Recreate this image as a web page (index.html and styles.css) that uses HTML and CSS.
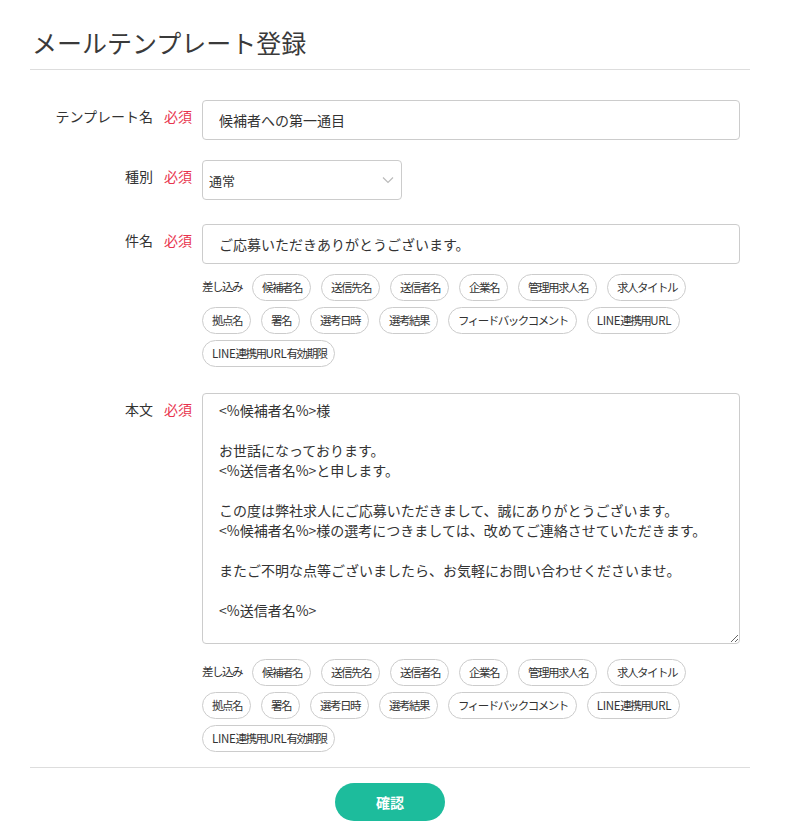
FILE: index.html
```html
<!DOCTYPE html>
<html>
<head>
	<meta charset="UTF-8">
	<title>メールテンプレート登録</title>
	<link rel="stylesheet" href="styles.css">
</head>
<body>
<div class="page">
	<h1 class="title">メールテンプレート登録</h1>
	<form class="form">
		<div class="row">
			<div class="label">テンプレート名<span class="req">必須</span></div>
			<div class="field">
				<input class="text" type="text" value="候補者への第一通目">
			</div>
		</div>
		<div class="row row-kind">
			<div class="label">種別<span class="req">必須</span></div>
			<div class="field">
				<div class="select">
					<select>
						<option>通常</option>
					</select>
					<svg class="chev" width="12" height="8" viewBox="0 0 12 8"><path d="M1 1.5l5 5 5-5" fill="none" stroke="#bbb" stroke-width="1.2"/></svg>
				</div>
			</div>
		</div>
		<div class="row row-subject">
			<div class="label">件名<span class="req">必須</span></div>
			<div class="field">
				<input class="text" type="text" value="ご応募いただきありがとうございます。">
				<ul class="tags">
					<li class="tags-head">差し込み</li>
					<li class="tag">候補者名</li>
					<li class="tag">送信先名</li>
					<li class="tag">送信者名</li>
					<li class="tag">企業名</li>
					<li class="tag">管理用求人名</li>
					<li class="tag">求人タイトル</li>
					<li class="tag">拠点名</li>
					<li class="tag">署名</li>
					<li class="tag">選考日時</li>
					<li class="tag">選考結果</li>
					<li class="tag">フィードバックコメント</li>
					<li class="tag"><span class="en">LINE</span>連携用<span class="en">URL</span></li>
					<li class="tag"><span class="en">LINE</span>連携用<span class="en">URL</span>有効期限</li>
				</ul>
			</div>
		</div>
		<div class="row row-body">
			<div class="label">本文<span class="req">必須</span></div>
			<div class="field">
<textarea class="body">&lt;%候補者名%&gt;様

お世話になっております。
&lt;%送信者名%&gt;と申します。

この度は弊社求人にご応募いただきまして、誠にありがとうございます。
&lt;%候補者名%&gt;様の選考につきましては、改めてご連絡させていただきます。

またご不明な点等ございましたら、お気軽にお問い合わせくださいませ。

&lt;%送信者名%&gt;</textarea>
				<ul class="tags tags-body">
					<li class="tags-head">差し込み</li>
					<li class="tag">候補者名</li>
					<li class="tag">送信先名</li>
					<li class="tag">送信者名</li>
					<li class="tag">企業名</li>
					<li class="tag">管理用求人名</li>
					<li class="tag">求人タイトル</li>
					<li class="tag">拠点名</li>
					<li class="tag">署名</li>
					<li class="tag">選考日時</li>
					<li class="tag">選考結果</li>
					<li class="tag">フィードバックコメント</li>
					<li class="tag"><span class="en">LINE</span>連携用<span class="en">URL</span></li>
					<li class="tag"><span class="en">LINE</span>連携用<span class="en">URL</span>有効期限</li>
				</ul>
			</div>
		</div>
		<div class="actions">
			<button type="button" class="btn">確認</button>
		</div>
	</form>
</div>
</body>
</html>
```

FILE: styles.css
```css
body,ul,li,h1{
	padding: 0;
	margin: 0;
}
li{
	list-style:none;
}
body{
	font-family:"Noto Sans CJK JP","Noto Sans",sans-serif;
	color:#333;
	background:#fff;
}

.page{
	width:720px;
	margin-left:30px;
}
.title{
	font-size:25px;
	font-weight:normal;
	line-height:36px;
	padding:24px 0 0 2px;
	height:45px;
	border-bottom:1px solid #ddd;
	color:#3a3a3a;
}

.form{
	padding:30px 10px 0 0;
}
.row{
	display:flex;
	gap:10px;
}
.row-kind{
	margin-top:20px;
}
.row-subject{
	margin-top:24px;
}
.row-body{
	margin-top:26px;
}
.label{
	width:162px;
	flex:none;
	text-align:right;
	font-size:14px;
	line-height:20px;
	padding-top:6px;
}
.req{
	color:#e8344e;
	margin-left:11px;
}
.field{
	flex:1;
}

.text{
	display:block;
	box-sizing:border-box;
	width:100%;
	height:40px;
	border:1px solid #ccc;
	border-radius:4px;
	padding:0 16px;
	font:14px "Noto Sans CJK JP",sans-serif;
	color:#333;
	outline:none;
}

.select{
	position:relative;
	width:200px;
}
.select select{
	display:block;
	box-sizing:border-box;
	width:200px;
	height:40px;
	border:1px solid #ccc;
	border-radius:4px;
	padding:0 6px;
	background:#fff;
	font:13px "Noto Sans CJK JP",sans-serif;
	color:#333;
	appearance:none;
	-webkit-appearance:none;
	outline:none;
}
.chev{
	position:absolute;
	right:8px;
	top:16px;
}

.body{
	display:block;
	box-sizing:border-box;
	width:100%;
	height:251px;
	border:1px solid #ccc;
	border-radius:4px;
	padding:6px 16px;
	font:14px/20px "Noto Sans CJK JP",sans-serif;
	color:#333;
	outline:none;
}

.tags{
	display:flex;
	flex-wrap:wrap;
	gap:6px 10px;
	margin-top:10px;
}
.tags-body{
	margin-top:15px;
}
.tags-head,
.tag{
	font-size:11.5px;
	letter-spacing:-1.5px;
	line-height:25px;
	height:25px;
}
.tag{
	border:1px solid #ccc;
	border-radius:14px;
	padding:0 8px 0 9px;
	color:#333;
	cursor:pointer;
}
.tag .en{
	letter-spacing:-0.3px;
}

.actions{
	border-top:1px solid #ddd;
	margin-top:15px;
	padding-top:15px;
	margin-right:-10px;
	text-align:center;
}
.btn{
	width:110px;
	height:38px;
	border:none;
	border-radius:19px;
	background:#1dbc9c;
	color:#fff;
	font:bold 14px "Noto Sans CJK JP",sans-serif;
	cursor:pointer;
}
```
